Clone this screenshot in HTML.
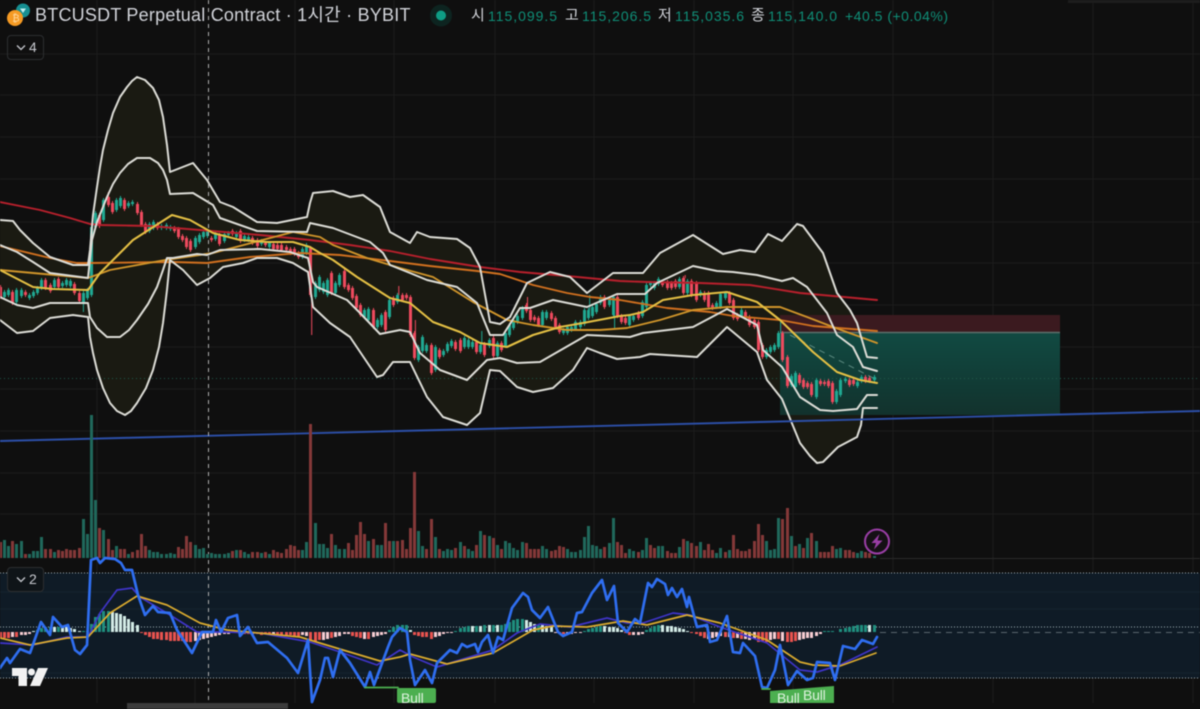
<!DOCTYPE html>
<html><head><meta charset="utf-8"><title>BTCUSDT</title>
<style>
html,body{margin:0;padding:0;background:#0f0f0f}
#w{position:relative;width:1200px;height:709px;overflow:hidden;background:#0f0f0f;font-family:"Liberation Sans","Noto Sans CJK KR",sans-serif;filter:blur(.45px)}
svg{position:absolute;left:0;top:0}
.c,.v,.h{position:absolute;left:-1.1px;display:flex}
.c{top:0;align-items:flex-start}
.v{top:415px;height:143px;align-items:flex-end}
.h{top:632px;align-items:flex-start}
.c i,.v i,.h i{flex:none;width:3px;margin-right:1.15px;display:block;position:relative}
.c i::before{content:"";position:absolute;left:1px;width:1px;top:-2px;bottom:-2px;background:inherit}
.r{background:#ee4a5e}.g{background:#20a892}
.v .r{background:#843838}.v .g{background:#20685b}
.t{background:#1f8f7e;transform:translateY(-100%)}
.w{background:#d3ebe6;transform:translateY(-100%)}
.e{background:#e9534f}.k{background:#f7cdd2}
.t0{position:absolute;white-space:nowrap}
#ti{left:35px;top:5px;font-size:18px;line-height:21px;color:#d2d4da;letter-spacing:.22px}
.o{top:8px;font-size:14px;line-height:17px;color:#0f8f78;letter-spacing:.97px}
.l{top:7px;font-size:15px;line-height:18px;color:#d2d4da}
.b{position:absolute;left:7px;width:35px;height:23px;border:1px solid #2c2e30;border-radius:4px;color:#c8cad0;font-size:14px;line-height:23px}
.b span{position:absolute;left:21px}
.b svg{left:8px;top:8px}
.bl{position:absolute;color:#dff3df;font-size:14px;line-height:16px;letter-spacing:-.2px}
</style></head><body><div id="w">

<svg width="1200" height="709" viewBox="0 0 1200 709">
<path d="M97 0V703M195 0V703M295 0V703M394 0V703M495 0V703M594 0V703M694 0V703M793 0V703M893 0V703M993 0V703M1093 0V703M1193 0V703M0 54H1200M0 95H1200M0 137H1200M0 179H1200M0 222H1200M0 263H1200M0 305H1200M0 347H1200M0 389H1200M0 431H1200M0 473H1200M0 514H1200" stroke="#1c1c1c" fill="none"/>
<path d="M880 558.5H1200" stroke="#2a2a2a"/>
<rect x="0" y="573" width="1200" height="105" fill="#0f1b26"/>
<path d="M0 592H1200M0 609H1200M0 673H1200" stroke="#16242f"/>
<path d="M0 573H1200M0 627H1200M0 678H1200" stroke="#a5b3bb" stroke-width="1" stroke-dasharray="1 2" fill="none"/>
<path d="M880 632.5H1200" stroke="#5a666e" stroke-dasharray="6 5"/>
<polygon fill="#1a1a12" points="0,220 13,221 20,230 33,243 50,257 73,265 88,265 90,250 93,215 97,187 100,167 103,150 108,130 113,113 120,97 127,87 132,81 137,77 145,80 153,88 159,100 163,117 167,145 170,172 193,163 207,180 220,202 233,207 257,222 277,223 307,217 310,203 313,193 333,191 350,197 363,195 380,207 390,232 410,243 417,232 430,237 457,239 470,248 480,267 490,322 500,324 510,317 527,283 550,272 570,277 587,293 600,283 613,273 643,273 660,253 693,235 723,254 740,250 755,252 768,234 782,241 797,224 803,226 823,253 837,293 850,310 857,323 867,357 877,358 877,408 863,408 861,425 857,437 838,447 823,462 817,463 810,456 800,443 782,399 767,380 757,352 727,327 697,357 650,354 640,357 617,359 600,353 587,348 573,370 553,388 533,392 517,387 500,371 490,370 480,413 467,425 443,417 427,397 410,362 393,362 383,375 377,377 350,337 330,323 313,307 308,272 293,263 277,258 257,258 243,263 223,267 210,278 197,285 183,270 170,260 167,290 163,323 159,347 153,370 146,388 137,403 131,411 125,415 117,411 110,403 103,388 97,370 93,353 90,337 88,317 73,315 50,318 33,331 17,333 0,320"/>
<rect x="780" y="315" width="280" height="17" fill="#3b1a1f"/>
<defs><linearGradient id="gg" x1="0" y1="0" x2="0" y2="1"><stop offset="0" stop-color="#114a42"/><stop offset="1" stop-color="#12322d"/></linearGradient></defs>
<rect x="780" y="333" width="280" height="82" fill="url(#gg)"/>
<path d="M780 332.5H1060" stroke="#5d6f6b" stroke-width="1.5"/>
<path d="M0 378.5H1200" stroke="#1f5a4c" stroke-dasharray="1 3"/>
<path d="M790 335L877 380" stroke="#5c8a80" stroke-dasharray="6 5" fill="none"/>
</svg>

<div class="c">
<i class=r style=margin-top:287px;height:10px></i><i class=g style=margin-top:292px;height:5px></i><i class=g style=margin-top:290px;height:5px></i><i class=r style=margin-top:292px;height:11px></i><i class=g style=margin-top:290px;height:12px></i><i class=g style=margin-top:290px;height:6px></i><i class=r style=margin-top:292px;height:3px></i><i class=g style=margin-top:295px;height:3px></i><i class=g style=margin-top:292px;height:4px></i><i class=g style=margin-top:288px;height:5px></i><i class=g style=margin-top:280px;height:8px></i><i class=r style=margin-top:280px;height:8px></i><i class=r style=margin-top:285px;height:6px></i><i class=g style=margin-top:280px;height:7px></i><i class=r style=margin-top:279px;height:8px></i><i class=g style=margin-top:283px;height:3px></i><i class=g style=margin-top:280px;height:5px></i><i class=g style=margin-top:281px;height:5px></i><i class=r style=margin-top:284px;height:9px></i><i class=r style=margin-top:293px;height:8px></i><i class=g style=margin-top:293px;height:10px></i><i class=g style=margin-top:290px;height:8px></i><i class=g style=margin-top:227px;height:68px></i><i class=g style=margin-top:213px;height:14px></i><i class=r style=margin-top:215px;height:11px></i><i class=g style=margin-top:200px;height:20px></i><i class=r style=margin-top:197px;height:8px></i><i class=r style=margin-top:203px;height:9px></i><i class=g style=margin-top:200px;height:10px></i><i class=g style=margin-top:198px;height:8px></i><i class=r style=margin-top:200px;height:9px></i><i class=g style=margin-top:203px;height:3px></i><i class=g style=margin-top:202px;height:2px></i><i class=r style=margin-top:204px;height:9px></i><i class=r style=margin-top:212px;height:13px></i><i class=r style=margin-top:224px;height:8px></i><i class=g style=margin-top:224px;height:7px></i><i class=g style=margin-top:222px;height:6px></i><i class=r style=margin-top:224px;height:4px></i><i class=g style=margin-top:226px;height:2px></i><i class=g style=margin-top:225px;height:3px></i><i class=g style=margin-top:227px;height:2px></i><i class=r style=margin-top:228px;height:3px></i><i class=r style=margin-top:229px;height:8px></i><i class=r style=margin-top:236px;height:4px></i><i class=r style=margin-top:238px;height:9px></i><i class=r style=margin-top:241px;height:9px></i><i class=g style=margin-top:238px;height:9px></i><i class=g style=margin-top:235px;height:7px></i><i class=g style=margin-top:232px;height:5px></i><i class=g style=margin-top:231px;height:5px></i><i class=r style=margin-top:238px;height:2px></i><i class=g style=margin-top:234px;height:5px></i><i class=r style=margin-top:235px;height:9px></i><i class=g style=margin-top:234px;height:7px></i><i class=g style=margin-top:233px;height:2px></i><i class=r style=margin-top:231px;height:3px></i><i class=g style=margin-top:233px;height:4px></i><i class=r style=margin-top:231px;height:10px></i><i class=g style=margin-top:236px;height:4px></i><i class=g style=margin-top:237px;height:3px></i><i class=r style=margin-top:238px;height:5px></i><i class=r style=margin-top:240px;height:6px></i><i class=g style=margin-top:241px;height:3px></i><i class=r style=margin-top:243px;height:2px></i><i class=g style=margin-top:243px;height:4px></i><i class=r style=margin-top:244px;height:5px></i><i class=r style=margin-top:245px;height:4px></i><i class=r style=margin-top:245px;height:5px></i><i class=r style=margin-top:247px;height:3px></i><i class=r style=margin-top:249px;height:4px></i><i class=r style=margin-top:249px;height:5px></i><i class=r style=margin-top:253px;height:4px></i><i class=g style=margin-top:249px;height:8px></i><i class=g style=margin-top:245px;height:8px></i><i class=r style=margin-top:248px;height:47px></i><i class=g style=margin-top:283px;height:14px></i><i class=g style=margin-top:277px;height:13px></i><i class=g style=margin-top:283px;height:9px></i><i class=g style=margin-top:280px;height:15px></i><i class=r style=margin-top:273px;height:20px></i><i class=g style=margin-top:283px;height:10px></i><i class=g style=margin-top:275px;height:10px></i><i class=r style=margin-top:271px;height:16px></i><i class=r style=margin-top:285px;height:5px></i><i class=r style=margin-top:288px;height:10px></i><i class=r style=margin-top:296px;height:12px></i><i class=r style=margin-top:305px;height:10px></i><i class=g style=margin-top:310px;height:7px></i><i class=g style=margin-top:309px;height:11px></i><i class=r style=margin-top:310px;height:17px></i><i class=g style=margin-top:320px;height:7px></i><i class=g style=margin-top:315px;height:10px></i><i class=r style=margin-top:312px;height:18px></i><i class=g style=margin-top:300px;height:17px></i><i class=r style=margin-top:298px;height:7px></i><i class=g style=margin-top:295px;height:7px></i><i class=r style=margin-top:295px;height:5px></i><i class=r style=margin-top:295px;height:3px></i><i class=r style=margin-top:297px;height:38px></i><i class=r style=margin-top:333px;height:25px></i><i class=g style=margin-top:347px;height:13px></i><i class=g style=margin-top:337px;height:14px></i><i class=g style=margin-top:345px;height:6px></i><i class=r style=margin-top:345px;height:28px></i><i class=g style=margin-top:347px;height:23px></i><i class=r style=margin-top:350px;height:7px></i><i class=g style=margin-top:351px;height:4px></i><i class=g style=margin-top:344px;height:7px></i><i class=g style=margin-top:341px;height:5px></i><i class=r style=margin-top:342px;height:7px></i><i class=r style=margin-top:340px;height:11px></i><i class=g style=margin-top:338px;height:9px></i><i class=g style=margin-top:340px;height:7px></i><i class=g style=margin-top:342px;height:5px></i><i class=r style=margin-top:342px;height:10px></i><i class=g style=margin-top:345px;height:7px></i><i class=r style=margin-top:344px;height:11px></i><i class=g style=margin-top:340px;height:6px></i><i class=r style=margin-top:338px;height:18px></i><i class=g style=margin-top:343px;height:13px></i><i class=r style=margin-top:343px;height:7px></i><i class=g style=margin-top:333px;height:13px></i><i class=g style=margin-top:325px;height:10px></i><i class=g style=margin-top:320px;height:8px></i><i class=g style=margin-top:316px;height:6px></i><i class=g style=margin-top:308px;height:10px></i><i class=r style=margin-top:305px;height:6px></i><i class=r style=margin-top:310px;height:10px></i><i class=r style=margin-top:317px;height:3px></i><i class=r style=margin-top:318px;height:7px></i><i class=g style=margin-top:312px;height:13px></i><i class=g style=margin-top:312px;height:6px></i><i class=r style=margin-top:313px;height:6px></i><i class=r style=margin-top:318px;height:9px></i><i class=r style=margin-top:325px;height:7px></i><i class=g style=margin-top:330px;height:3px></i><i class=g style=margin-top:327px;height:6px></i><i class=g style=margin-top:327px;height:3px></i><i class=g style=margin-top:322px;height:7px></i><i class=g style=margin-top:322px;height:5px></i><i class=g style=margin-top:310px;height:14px></i><i class=g style=margin-top:310px;height:8px></i><i class=g style=margin-top:307px;height:9px></i><i class=g style=margin-top:304px;height:8px></i><i class=g style=margin-top:297px;height:6px></i><i class=r style=margin-top:297px;height:10px></i><i class=g style=margin-top:300px;height:5px></i><i class=g style=margin-top:297px;height:18px></i><i class=r style=margin-top:297px;height:19px></i><i class=r style=margin-top:316px;height:6px></i><i class=r style=margin-top:318px;height:5px></i><i class=g style=margin-top:316px;height:9px></i><i class=g style=margin-top:316px;height:4px></i><i class=r style=margin-top:313px;height:5px></i><i class=g style=margin-top:302px;height:14px></i><i class=g style=margin-top:285px;height:22px></i><i class=g style=margin-top:283px;height:2px></i><i class=g style=margin-top:283px;height:5px></i><i class=g style=margin-top:279px;height:5px></i><i class=r style=margin-top:283px;height:2px></i><i class=r style=margin-top:282px;height:6px></i><i class=r style=margin-top:283px;height:5px></i><i class=r style=margin-top:281px;height:6px></i><i class=g style=margin-top:279px;height:8px></i><i class=r style=margin-top:278px;height:15px></i><i class=g style=margin-top:281px;height:12px></i><i class=r style=margin-top:281px;height:14px></i><i class=r style=margin-top:283px;height:17px></i><i class=g style=margin-top:292px;height:3px></i><i class=r style=margin-top:293px;height:7px></i><i class=r style=margin-top:293px;height:14px></i><i class=r style=margin-top:305px;height:3px></i><i class=g style=margin-top:303px;height:4px></i><i class=g style=margin-top:294px;height:13px></i><i class=g style=margin-top:293px;height:5px></i><i class=r style=margin-top:293px;height:10px></i><i class=r style=margin-top:300px;height:18px></i><i class=r style=margin-top:315px;height:4px></i><i class=g style=margin-top:310px;height:6px></i><i class=r style=margin-top:312px;height:6px></i><i class=r style=margin-top:317px;height:8px></i><i class=r style=margin-top:320px;height:7px></i><i class=r style=margin-top:322px;height:28px></i><i class=r style=margin-top:345px;height:12px></i><i class=g style=margin-top:350px;height:7px></i><i class=g style=margin-top:347px;height:5px></i><i class=g style=margin-top:345px;height:5px></i><i class=g style=margin-top:333px;height:14px></i><i class=r style=margin-top:333px;height:27px></i><i class=r style=margin-top:357px;height:29px></i><i class=g style=margin-top:376px;height:9px></i><i class=g style=margin-top:373px;height:14px></i><i class=r style=margin-top:375px;height:8px></i><i class=r style=margin-top:380px;height:7px></i><i class=r style=margin-top:383px;height:4px></i><i class=r style=margin-top:384px;height:11px></i><i class=g style=margin-top:380px;height:17px></i><i class=r style=margin-top:381px;height:3px></i><i class=r style=margin-top:382px;height:2px></i><i class=r style=margin-top:381px;height:5px></i><i class=r style=margin-top:383px;height:19px></i><i class=g style=margin-top:391px;height:11px></i><i class=g style=margin-top:380px;height:15px></i><i class=g style=margin-top:379px;height:2px></i><i class=r style=margin-top:380px;height:5px></i><i class=r style=margin-top:380px;height:4px></i><i class=g style=margin-top:382px;height:4px></i><i class=g style=margin-top:377px;height:4px></i><i class=r style=margin-top:377px;height:4px></i><i class=r style=margin-top:378px;height:3px></i><i class=g style=margin-top:377px;height:3px></i>
</div>

<svg width="1200" height="709" viewBox="0 0 1200 709">
<g fill="none" stroke-width="1">
<path d="M311.7 295V335M415.4 320V333M108.3 192V197M398.8 286V295M527.5 297V305M685.2 275V278" stroke="#ee4a5e"/>
<path d="M83.4 303V312M481.8 331V345M614.6 315V328M589.7 295V310M780.6 320V333" stroke="#20a892"/>
</g>
<g fill="none" stroke-linejoin="round" stroke-linecap="round">
<polyline stroke="#b8202c" stroke-width="1.9" points="0,202 40,210 70,218 90,224 100,225 150,226 200,230 260,235 310,240 350,245 390,251 430,259 480,267 520,272 567,276 620,281 647,282 700,283 750,285 800,293 877,300"/>
<polyline stroke="#d0701f" stroke-width="1.9" points="0,246 50,258 77,263 90,263 173,262 207,263 250,257 300,253 320,254 340,255 390,261 430,266 477,271 500,274 533,285 567,293 590,297 620,300 667,308 710,312 733,316 780,320 813,326 877,331"/>
<polyline stroke="#cf942a" stroke-width="1.9" points="0,270 33,273 88,278 110,270 165,260 213,253 293,232 320,237 333,245 367,258 400,268 433,277 473,302 507,320 533,325 567,330 600,330 627,328 660,320 693,310 727,307 780,307 807,317 833,327 877,343"/>
<polyline stroke="#e3bf44" stroke-width="2.1" points="0,270 33,287 53,289 88,290 100,273 133,240 172,215 190,220 213,233 240,240 267,242 293,242 310,247 320,253 333,260 357,277 390,298 410,303 433,322 460,332 480,343 507,347 533,335 560,327 583,323 620,316 630,315 643,312 663,300 693,295 727,292 757,302 780,320 813,352 837,372 860,380 877,383"/>
<g stroke="#dcdcd6" stroke-width="2">
<polyline points="0,220 13,221 20,230 33,243 50,257 73,265 88,265 90,250 93,215 97,187 100,167 103,150 108,130 113,113 120,97 127,87 132,81 137,77 145,80 153,88 159,100 163,117 167,145 170,172 193,163 207,180 220,202 233,207 257,222 277,223 307,217 310,203 313,193 333,191 350,197 363,195 380,207 390,232 410,243 417,232 430,237 457,239 470,248 480,267 490,322 500,324 510,317 527,283 550,272 570,277 587,293 600,283 613,273 643,273 660,253 693,235 723,254 740,250 755,252 768,234 782,241 797,224 803,226 823,253 837,293 850,310 857,323 867,357 877,358"/>
<polyline points="0,245 17,252 33,262 50,273 88,278 92,240 97,222 107,197 113,184 120,173 128,164 137,158 150,158 158,163 163,170 167,180 170,194 193,193 213,205 220,218 257,231 307,232 310,223 333,228 370,242 383,253 390,265 410,273 427,280 457,287 477,303 490,335 503,335 520,308 530,308 553,300 587,307 617,294 645,294 657,283 693,266 717,271 733,272 757,275 782,281 793,278 807,287 827,313 837,335 853,347 863,367 877,371"/>
<polyline points="0,297 17,305 33,308 50,303 88,303 90,317 97,328 107,337 120,337 129,330 137,320 148,304 157,287 163,270 167,258 173,258 197,254 207,255 220,250 260,249 290,252 308,258 313,282 317,287 347,300 360,313 380,334 400,330 410,332 420,353 440,370 467,380 487,360 500,358 517,363 540,362 587,335 630,337 643,333 693,327 727,309 757,325 763,350 782,367 800,397 820,410 833,411 857,409 867,395 877,395"/>
<polyline points="0,320 17,333 33,331 50,318 73,315 88,317 90,337 93,353 97,370 103,388 110,403 117,411 125,415 131,411 137,403 146,388 153,370 159,347 163,323 167,290 170,260 183,270 197,285 210,278 223,267 243,263 257,258 277,258 293,263 308,272 313,307 330,323 350,337 377,377 383,375 393,362 410,362 427,397 443,417 467,425 480,413 490,370 500,371 517,387 533,392 553,388 573,370 587,348 600,353 617,359 640,357 650,354 697,357 727,327 757,352 767,380 782,399 800,443 810,456 817,463 823,462 838,447 857,437 861,425 863,408 877,408"/>
</g>
</g>
<path d="M0 441L1200 411" stroke="#2c4fa8" stroke-width="1.9" fill="none"/>
<path d="M208.5 0V703" stroke="#b0b0b0" stroke-width="1" stroke-dasharray="4 4" fill="none"/>
</svg>

<div class="v">
<i class=r style=height:16px></i><i class=g style=height:18px></i><i class=g style=height:12px></i><i class=r style=height:17px></i><i class=g style=height:14px></i><i class=g style=height:17px></i><i class=r style=height:4px></i><i class=g style=height:4px></i><i class=g style=height:7px></i><i class=g style=height:7px></i><i class=g style=height:21px></i><i class=r style=height:9px></i><i class=r style=height:9px></i><i class=g style=height:6px></i><i class=r style=height:8px></i><i class=r style=height:7px></i><i class=r style=height:9px></i><i class=r style=height:8px></i><i class=r style=height:8px></i><i class=r style=height:10px></i><i class=g style=height:39px></i><i class=g style=height:24px></i><i class=g style=height:143px></i><i class=g style=height:58px></i><i class=r style=height:30px></i><i class=g style=height:28px></i><i class=r style=height:19px></i><i class=r style=height:8px></i><i class=g style=height:12px></i><i class=r style=height:9px></i><i class=r style=height:9px></i><i class=g style=height:4px></i><i class=r style=height:6px></i><i class=r style=height:8px></i><i class=r style=height:24px></i><i class=r style=height:12px></i><i class=g style=height:8px></i><i class=g style=height:6px></i><i class=g style=height:6px></i><i class=g style=height:4px></i><i class=g style=height:4px></i><i class=g style=height:5px></i><i class=g style=height:4px></i><i class=r style=height:11px></i><i class=r style=height:9px></i><i class=r style=height:22px></i><i class=r style=height:16px></i><i class=g style=height:13px></i><i class=g style=height:9px></i><i class=g style=height:10px></i><i class=g style=height:4px></i><i class=g style=height:5px></i><i class=g style=height:4px></i><i class=g style=height:4px></i><i class=g style=height:4px></i><i class=g style=height:5px></i><i class=r style=height:7px></i><i class=g style=height:8px></i><i class=r style=height:8px></i><i class=g style=height:6px></i><i class=g style=height:4px></i><i class=r style=height:6px></i><i class=r style=height:6px></i><i class=g style=height:5px></i><i class=r style=height:6px></i><i class=g style=height:4px></i><i class=r style=height:8px></i><i class=r style=height:6px></i><i class=r style=height:5px></i><i class=r style=height:9px></i><i class=r style=height:13px></i><i class=r style=height:12px></i><i class=r style=height:8px></i><i class=g style=height:8px></i><i class=g style=height:16px></i><i class=r style=height:134px></i><i class=g style=height:35px></i><i class=g style=height:14px></i><i class=g style=height:14px></i><i class=g style=height:10px></i><i class=r style=height:24px></i><i class=g style=height:13px></i><i class=g style=height:9px></i><i class=g style=height:9px></i><i class=r style=height:15px></i><i class=r style=height:8px></i><i class=r style=height:23px></i><i class=r style=height:36px></i><i class=r style=height:24px></i><i class=g style=height:17px></i><i class=r style=height:19px></i><i class=g style=height:13px></i><i class=g style=height:13px></i><i class=r style=height:35px></i><i class=r style=height:17px></i><i class=g style=height:17px></i><i class=r style=height:17px></i>
<i class=r style=height:18px></i><i class=r style=height:9px></i><i class=r style=height:30px></i><i class=r style=height:86px></i><i class=g style=height:27px></i><i class=g style=height:12px></i><i class=r style=height:9px></i><i class=r style=height:39px></i><i class=g style=height:21px></i><i class=r style=height:9px></i><i class=g style=height:7px></i><i class=g style=height:9px></i><i class=g style=height:8px></i><i class=r style=height:10px></i><i class=g style=height:16px></i><i class=r style=height:12px></i><i class=g style=height:9px></i><i class=g style=height:7px></i><i class=r style=height:13px></i><i class=g style=height:27px></i><i class=r style=height:23px></i><i class=g style=height:22px></i><i class=r style=height:20px></i><i class=g style=height:13px></i><i class=r style=height:9px></i><i class=g style=height:17px></i><i class=g style=height:15px></i><i class=g style=height:10px></i><i class=g style=height:8px></i><i class=g style=height:16px></i><i class=r style=height:15px></i><i class=r style=height:9px></i><i class=r style=height:9px></i><i class=r style=height:9px></i><i class=g style=height:12px></i><i class=g style=height:9px></i><i class=r style=height:7px></i><i class=r style=height:8px></i><i class=r style=height:12px></i><i class=r style=height:11px></i><i class=g style=height:9px></i><i class=g style=height:6px></i><i class=g style=height:6px></i><i class=g style=height:8px></i><i class=g style=height:21px></i><i class=g style=height:32px></i><i class=g style=height:13px></i><i class=g style=height:12px></i><i class=g style=height:9px></i><i class=r style=height:11px></i><i class=g style=height:15px></i><i class=g style=height:40px></i><i class=r style=height:16px></i><i class=r style=height:13px></i><i class=r style=height:5px></i><i class=g style=height:9px></i><i class=g style=height:7px></i><i class=r style=height:6px></i><i class=g style=height:8px></i><i class=g style=height:20px></i><i class=r style=height:13px></i><i class=r style=height:10px></i><i class=g style=height:12px></i><i class=g style=height:12px></i><i class=r style=height:7px></i><i class=r style=height:5px></i><i class=r style=height:5px></i><i class=g style=height:11px></i><i class=r style=height:19px></i><i class=g style=height:17px></i><i class=r style=height:15px></i><i class=r style=height:12px></i><i class=g style=height:16px></i><i class=r style=height:8px></i><i class=r style=height:14px></i><i class=r style=height:8px></i><i class=g style=height:5px></i><i class=g style=height:10px></i><i class=r style=height:6px></i><i class=g style=height:8px></i><i class=r style=height:23px></i><i class=r style=height:9px></i><i class=r style=height:7px></i><i class=r style=height:7px></i><i class=r style=height:9px></i><i class=r style=height:17px></i><i class=r style=height:34px></i><i class=r style=height:23px></i><i class=g style=height:17px></i><i class=g style=height:8px></i><i class=g style=height:9px></i><i class=g style=height:40px></i><i class=r style=height:39px></i><i class=r style=height:50px></i><i class=g style=height:22px></i><i class=r style=height:12px></i>
<i class=g style=height:14px></i><i class=r style=height:10px></i><i class=g style=height:20px></i><i class=r style=height:25px></i><i class=g style=height:17px></i><i class=r style=height:6px></i><i class=r style=height:6px></i><i class=r style=height:6px></i><i class=r style=height:12px></i><i class=g style=height:9px></i><i class=g style=height:10px></i><i class=r style=height:8px></i><i class=r style=height:8px></i><i class=r style=height:6px></i><i class=g style=height:5px></i><i class=g style=height:7px></i><i class=r style=height:6px></i><i class=r style=height:5px></i><i class=g style=height:2px></i>
</div>

<div class="h">
<i class=e style=height:6px></i><i class=e style=height:6px></i><i class=e style=height:6px></i><i class=k style=height:5px></i><i class=e style=height:5px></i><i class=k style=height:3px></i><i class=k style=height:3px></i><i class=k style=height:2px></i><i class=w style=height:1px></i><i class=t style=height:2px></i><i class=t style=height:4px></i><i class=t style=height:5px></i><i class=t style=height:5px></i><i class=w style=height:5px></i><i class=t style=height:5px></i><i class=w style=height:6px></i><i class=w style=height:6px></i><i class=w style=height:4px></i><i class=w style=height:3px></i><i class=w style=height:1px></i><i class=t style=height:1px></i><i class=t style=height:1px></i><i class=t style=height:8px></i><i class=t style=height:15px></i><i class=t style=height:18px></i><i class=t style=height:21px></i><i class=t style=height:21px></i><i class=w style=height:20px></i><i class=w style=height:19px></i><i class=w style=height:18px></i><i class=w style=height:16px></i><i class=w style=height:13px></i><i class=w style=height:10px></i><i class=w style=height:7px></i><i class=e style=height:1px></i><i class=e style=height:3px></i><i class=e style=height:5px></i><i class=e style=height:7px></i><i class=e style=height:7px></i><i class=e style=height:8px></i><i class=e style=height:8px></i><i class=e style=height:9px></i><i class=e style=height:9px></i><i class=e style=height:9px></i><i class=e style=height:9px></i><i class=e style=height:10px></i><i class=e style=height:10px></i><i class=k style=height:9px></i><i class=k style=height:8px></i><i class=k style=height:7px></i><i class=k style=height:6px></i><i class=k style=height:5px></i><i class=k style=height:4px></i><i class=k style=height:3px></i><i class=k style=height:2px></i><i class=k style=height:2px></i><i class=k style=height:1px></i><i class=k style=height:1px></i><i class=e style=height:1px></i><i class=e style=height:2px></i><i class=e style=height:2px></i><i class=k style=height:2px></i><i class=e style=height:2px></i><i class=e style=height:3px></i><i class=e style=height:2px></i><i class=e style=height:2px></i><i class=k style=height:2px></i><i class=e style=height:3px></i><i class=e style=height:3px></i><i class=e style=height:3px></i><i class=e style=height:3px></i><i class=e style=height:4px></i><i class=e style=height:4px></i><i class=k style=height:3px></i><i class=k style=height:4px></i><i class=e style=height:8px></i><i class=e style=height:9px></i><i class=e style=height:8px></i><i class=k style=height:8px></i><i class=k style=height:7px></i><i class=e style=height:6px></i><i class=k style=height:5px></i><i class=k style=height:4px></i><i class=k style=height:2px></i><i class=k style=height:2px></i><i class=e style=height:4px></i><i class=e style=height:5px></i><i class=e style=height:6px></i><i class=k style=height:7px></i><i class=e style=height:7px></i><i class=k style=height:5px></i><i class=k style=height:4px></i><i class=k style=height:3px></i><i class=k style=height:2px></i><i class=t style=height:2px></i><i class=t style=height:5px></i><i class=t style=height:7px></i>
<i class=t style=height:7px></i><i class=t style=height:7px></i><i class=w style=height:2px></i><i class=e style=height:3px></i><i class=e style=height:4px></i><i class=e style=height:5px></i><i class=e style=height:5px></i><i class=e style=height:7px></i><i class=k style=height:5px></i><i class=k style=height:4px></i><i class=k style=height:2px></i><i class=k style=height:1px></i><i class=k style=height:1px></i><i class=t style=height:1px></i><i class=t style=height:4px></i><i class=t style=height:5px></i><i class=t style=height:6px></i><i class=w style=height:6px></i><i class=t style=height:6px></i><i class=w style=height:6px></i><i class=t style=height:7px></i><i class=w style=height:7px></i><i class=t style=height:7px></i><i class=w style=height:7px></i><i class=t style=height:7px></i><i class=t style=height:8px></i><i class=t style=height:10px></i><i class=t style=height:12px></i><i class=t style=height:13px></i><i class=t style=height:13px></i><i class=w style=height:12px></i><i class=w style=height:10px></i><i class=w style=height:8px></i><i class=t style=height:7px></i><i class=w style=height:7px></i><i class=w style=height:6px></i><i class=w style=height:6px></i><i class=k style=height:1px></i><i class=e style=height:1px></i><i class=e style=height:2px></i><i class=k style=height:2px></i><i class=k style=height:2px></i><i class=k style=height:1px></i><i class=k style=height:1px></i><i class=t style=height:1px></i><i class=t style=height:3px></i><i class=t style=height:4px></i><i class=t style=height:5px></i><i class=t style=height:6px></i><i class=w style=height:6px></i><i class=w style=height:5px></i><i class=w style=height:5px></i><i class=w style=height:4px></i><i class=w style=height:2px></i><i class=e style=height:1px></i><i class=e style=height:3px></i><i class=k style=height:3px></i><i class=k style=height:3px></i><i class=k style=height:2px></i><i class=t style=height:2px></i><i class=t style=height:4px></i><i class=t style=height:6px></i><i class=t style=height:7px></i><i class=w style=height:7px></i><i class=w style=height:6px></i><i class=w style=height:6px></i><i class=w style=height:5px></i><i class=w style=height:4px></i><i class=w style=height:3px></i><i class=w style=height:1px></i><i class=e style=height:1px></i><i class=e style=height:2px></i><i class=e style=height:4px></i><i class=e style=height:6px></i><i class=k style=height:7px></i><i class=k style=height:6px></i><i class=k style=height:5px></i><i class=k style=height:4px></i><i class=e style=height:5px></i><i class=k style=height:5px></i><i class=e style=height:6px></i><i class=k style=height:6px></i><i class=e style=height:7px></i><i class=k style=height:7px></i><i class=k style=height:8px></i><i class=k style=height:7px></i><i class=e style=height:10px></i><i class=e style=height:10px></i><i class=e style=height:10px></i><i class=k style=height:8px></i><i class=k style=height:7px></i><i class=e style=height:7px></i><i class=k style=height:9px></i><i class=e style=height:10px></i><i class=e style=height:10px></i><i class=e style=height:9px></i>
<i class=k style=height:8px></i><i class=k style=height:7px></i><i class=k style=height:6px></i><i class=k style=height:6px></i><i class=k style=height:4px></i><i class=k style=height:2px></i><i class=t style=height:1px></i><i class=t style=height:1px></i><i class=t style=height:1px></i><i class=t style=height:0></i><i class=t style=height:3px></i><i class=t style=height:4px></i><i class=t style=height:5px></i><i class=t style=height:6px></i><i class=t style=height:7px></i><i class=t style=height:7px></i><i class=t style=height:7px></i><i class=w style=height:7px></i><i class=t style=height:7px></i>
</div>

<svg width="1200" height="709" viewBox="0 0 1200 709">
<g fill="none" stroke-linejoin="round" stroke-linecap="round">
<polyline stroke="#3f34c8" stroke-width="1.7" points="0,643 33,645 67,637 88,637 100,613 117,590 132,588 140,597 170,615 197,632 227,632 260,633 310,642 340,652 377,665 400,650 413,657 437,667 493,650 517,633 540,624 570,627 607,618 627,623 643,623 673,613 690,615 720,627 767,643 800,670 817,672 840,665 877,647"/>
<polyline stroke="#dbab2e" stroke-width="1.7" points="0,638 30,645 67,638 88,637 110,613 137,596 167,605 200,623 227,630 300,637 343,650 380,661 400,657 410,654 447,664 493,653 533,630 553,626 587,627 623,621 647,625 687,615 720,623 767,640 800,662 813,665 840,666 876,653"/>
<polyline stroke="#2f6ef0" stroke-width="2.7" points="0,668 7,658 10,663 20,649 30,653 41,622 50,635 53,617 62,627 68,625 75,650 80,654 87,645 91,560 97,558 100,563 105,558 115,559 121,563 125,570 132,570 138,595 145,615 153,606 158,612 170,613 177,630 192,653 202,632 213,632 216,620 221,632 228,618 237,615 240,636 248,627 257,643 268,642 287,658 298,673 308,640 312,702 320,680 325,658 328,658 333,677 340,650 350,663 365,687 370,672 374,685 388,647 392,637 400,628 407,632 410,660 415,685 425,670 432,683 437,663 450,650 457,653 462,644 467,647 475,644 478,652 482,642 488,635 493,653 498,637 503,640 512,608 523,593 528,597 532,610 540,618 548,607 558,632 563,636 572,632 577,613 582,612 592,593 602,580 607,600 614,586 618,623 627,632 635,619 640,623 648,583 652,587 657,579 665,584 668,595 672,588 677,597 682,589 687,607 689,597 697,627 707,625 710,642 717,640 727,616 733,652 740,653 743,643 755,656 762,687 767,688 775,670 780,645 788,685 797,671 807,680 813,678 817,662 830,663 835,680 843,646 855,649 862,640 873,644 877,637"/>
<path d="M365 687.5H398M762 689H770" stroke="#4caf50" stroke-width="1.8"/>
</g>
<rect x="397" y="688" width="39" height="15" rx="2" fill="#4caf50"/>
<polygon points="770,691 834,686 834,703 770,703" fill="#4caf50"/>
<path d="M12 668H27V686H18.5V676H12Z" fill="#f2f2f2"/>
<circle cx="31.5" cy="672" r="3.5" fill="#f2f2f2"/>
<path d="M48 668H38L30 686H40Z" fill="#f2f2f2"/>
<circle cx="877" cy="541.5" r="12" fill="#151015" stroke="#9a3ea6" stroke-width="2"/>
<path d="M879.5 534L871.5 543H876L874 549.5L882.5 540.5H877.5Z" fill="#9a3ea6"/>
<circle cx="441" cy="15.5" r="11" fill="#0d2420"/>
<circle cx="441" cy="15.5" r="5" fill="#0e9d85"/>
<circle cx="23" cy="10.5" r="7" fill="#168f92"/>
<path d="M20 8.5h6l-3 4.5z" fill="#bfeff0"/>
<circle cx="15" cy="18" r="8" fill="#f59a23"/>
<text x="12.3" y="21.5" font-size="10" font-family="Liberation Sans" fill="#ffd9a0">₿</text>
<rect x="127" y="703" width="161" height="6" fill="#3c3c3c"/>
<rect x="1068" y="0" width="132" height="3" fill="#1d1d1d"/>
</svg>

<div class="bl" style="left:401px;top:690px;height:13px;overflow:hidden">Bull</div>
<div class="bl" style="left:777px;top:690px;height:13px;overflow:hidden">Bull</div>
<div class="bl" style="left:803px;top:687px;height:16px;overflow:hidden">Bull</div>

<div class="t0" id="ti">BTCUSDT Perpetual Contract · 1시간 · BYBIT</div>
<div class="t0 l" style="left:471px">시</div><div class="t0 o" style="left:488px">115,099.5</div>
<div class="t0 l" style="left:565px">고</div><div class="t0 o" style="left:582px">115,206.5</div>
<div class="t0 l" style="left:658px">저</div><div class="t0 o" style="left:675px">115,035.6</div>
<div class="t0 l" style="left:751px">종</div><div class="t0 o" style="left:768px">115,140.0</div>
<div class="t0 o" style="left:845px;letter-spacing:.5px">+40.5 (+0.04%)</div>

<div class="b" style="top:35px"><svg width="12" height="8" viewBox="0 0 12 8"><path d="M1 1.5L5 5.5L9 1.5" fill="none" stroke="#c8cad0" stroke-width="1.3"/></svg><span>4</span></div>
<div class="b" style="top:567px;background:#0f1418"><svg width="12" height="8" viewBox="0 0 12 8"><path d="M1 1.5L5 5.5L9 1.5" fill="none" stroke="#c8cad0" stroke-width="1.3"/></svg><span>2</span></div>
</div></body></html>
